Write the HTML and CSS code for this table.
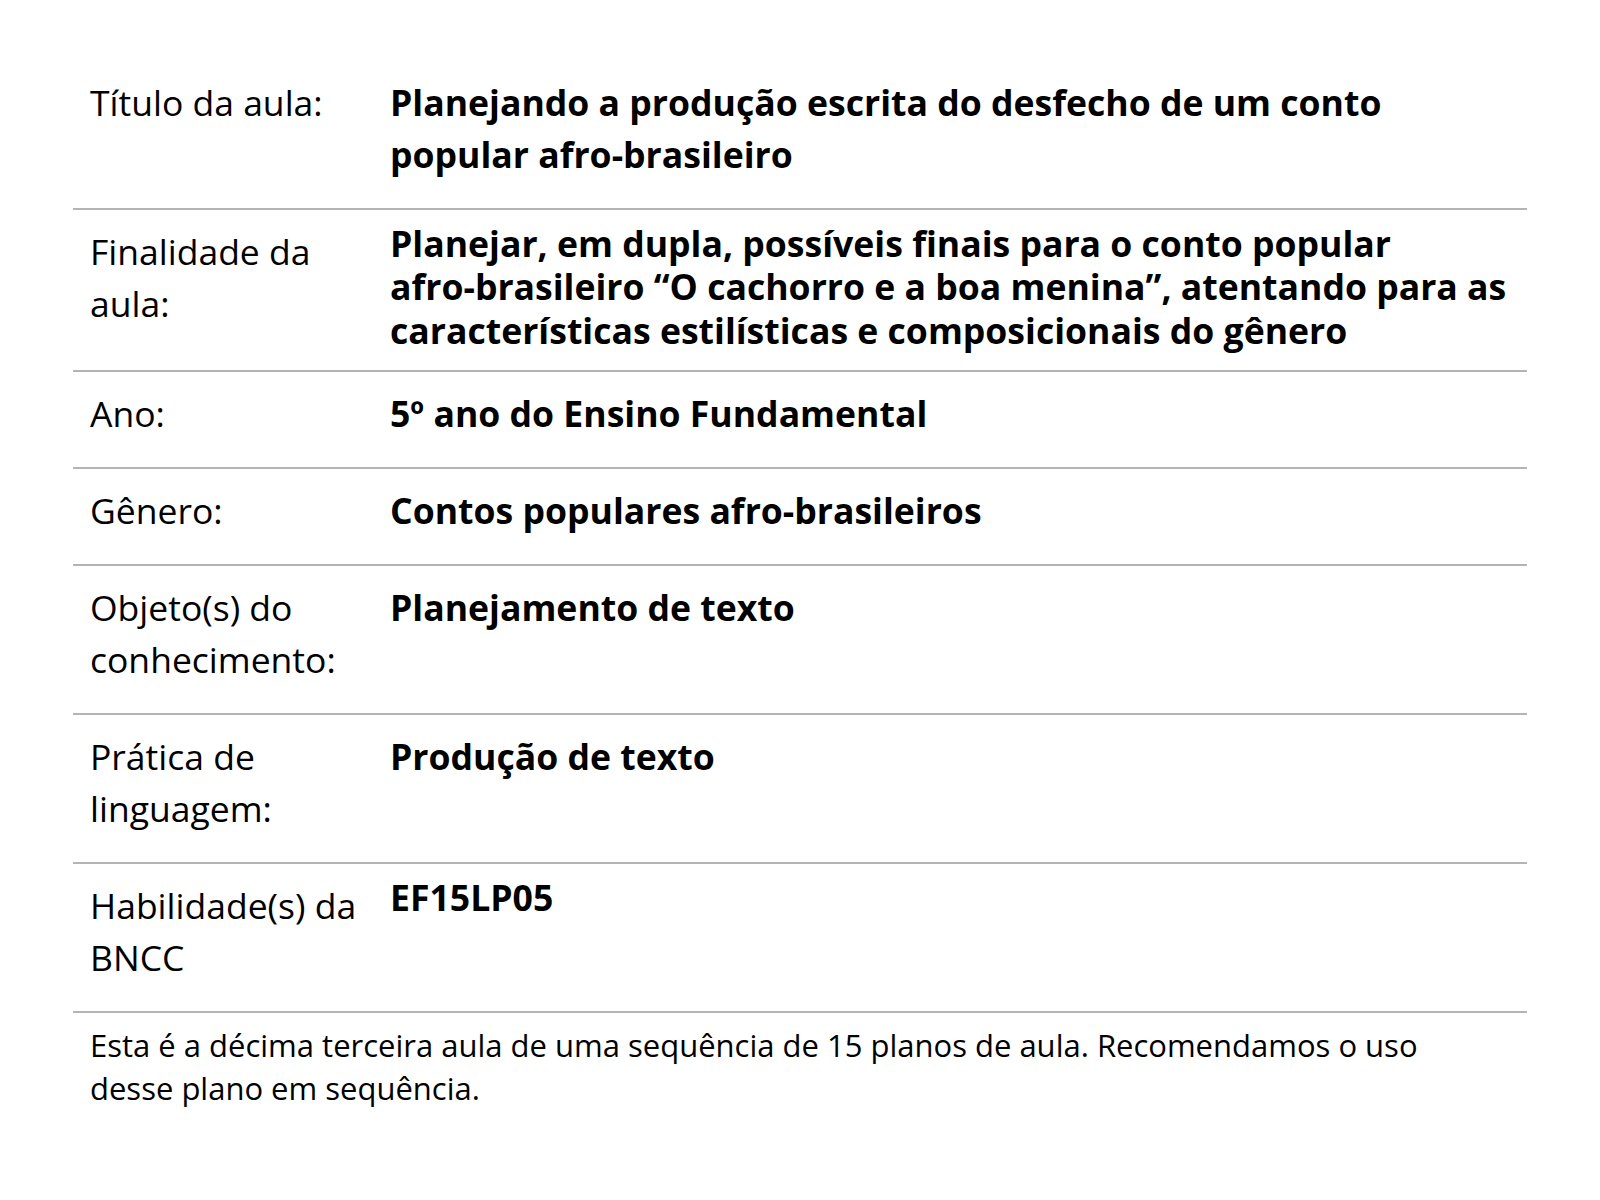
FILE: index.html
```html
<!DOCTYPE html>
<html lang="pt-BR">
<head>
<meta charset="utf-8">
<title>Plano de aula</title>
<link rel="stylesheet" href="styles.css">
</head>
<body>
<main class="sheet">
  <div class="row">
    <div class="label">Título da aula:</div>
    <div class="value">Planejando a produção escrita do desfecho de um conto popular <span class="nowrap">afro-brasileiro</span></div>
  </div>
  <div class="row">
    <div class="label">Finalidade da aula:</div>
    <div class="value tight">Planejar, em dupla, possíveis finais para o conto popular <span class="nowrap">afro-brasileiro</span> “O cachorro e a boa menina”, atentando para as características estilísticas e composicionais do gênero</div>
  </div>
  <div class="row">
    <div class="label">Ano:</div>
    <div class="value">5º ano do Ensino Fundamental</div>
  </div>
  <div class="row">
    <div class="label">Gênero:</div>
    <div class="value">Contos populares <span class="nowrap">afro-brasileiros</span></div>
  </div>
  <div class="row">
    <div class="label">Objeto(s) do conhecimento:</div>
    <div class="value">Planejamento de texto</div>
  </div>
  <div class="row">
    <div class="label">Prática de linguagem:</div>
    <div class="value">Produção de texto</div>
  </div>
  <div class="row">
    <div class="label">Habilidade(s) da BNCC</div>
    <div class="value tight">EF15LP05</div>
  </div>
  <p class="note">Esta é a décima terceira aula de uma sequência de 15 planos de aula. Recomendamos o uso desse plano em sequência.</p>
</main>
</body>
</html>
```

FILE: styles.css
```css
html, body {
  margin: 0;
  padding: 0;
  background: #ffffff;
}

body {
  font-family: "Open Sans", "Noto Sans", sans-serif;
  color: #000000;
}

.sheet {
  width: 1454px;
  margin: 0 0 0 73px;
  padding-top: 61px;
}

.row {
  display: grid;
  grid-template-columns: 300px 1fr;
  border-bottom: 2px solid #b4b4b4;
}

.label {
  padding: 15px 0 28px 17px;
  font-size: 35.5px;
  line-height: 52px;
  font-weight: 400;
}

.value {
  padding: 15px 17px 28px 17px;
  font-size: 35.6px;
  line-height: 52px;
  font-weight: 700;
}

.value.tight {
  line-height: 43.3px;
  padding-top: 12px;
  padding-bottom: 18px;
}

.nowrap {
  white-space: nowrap;
}

.note {
  margin: 0;
  padding: 11px 90px 12px 17px;
  font-size: 31px;
  line-height: 43px;
  font-weight: 400;
}
```
